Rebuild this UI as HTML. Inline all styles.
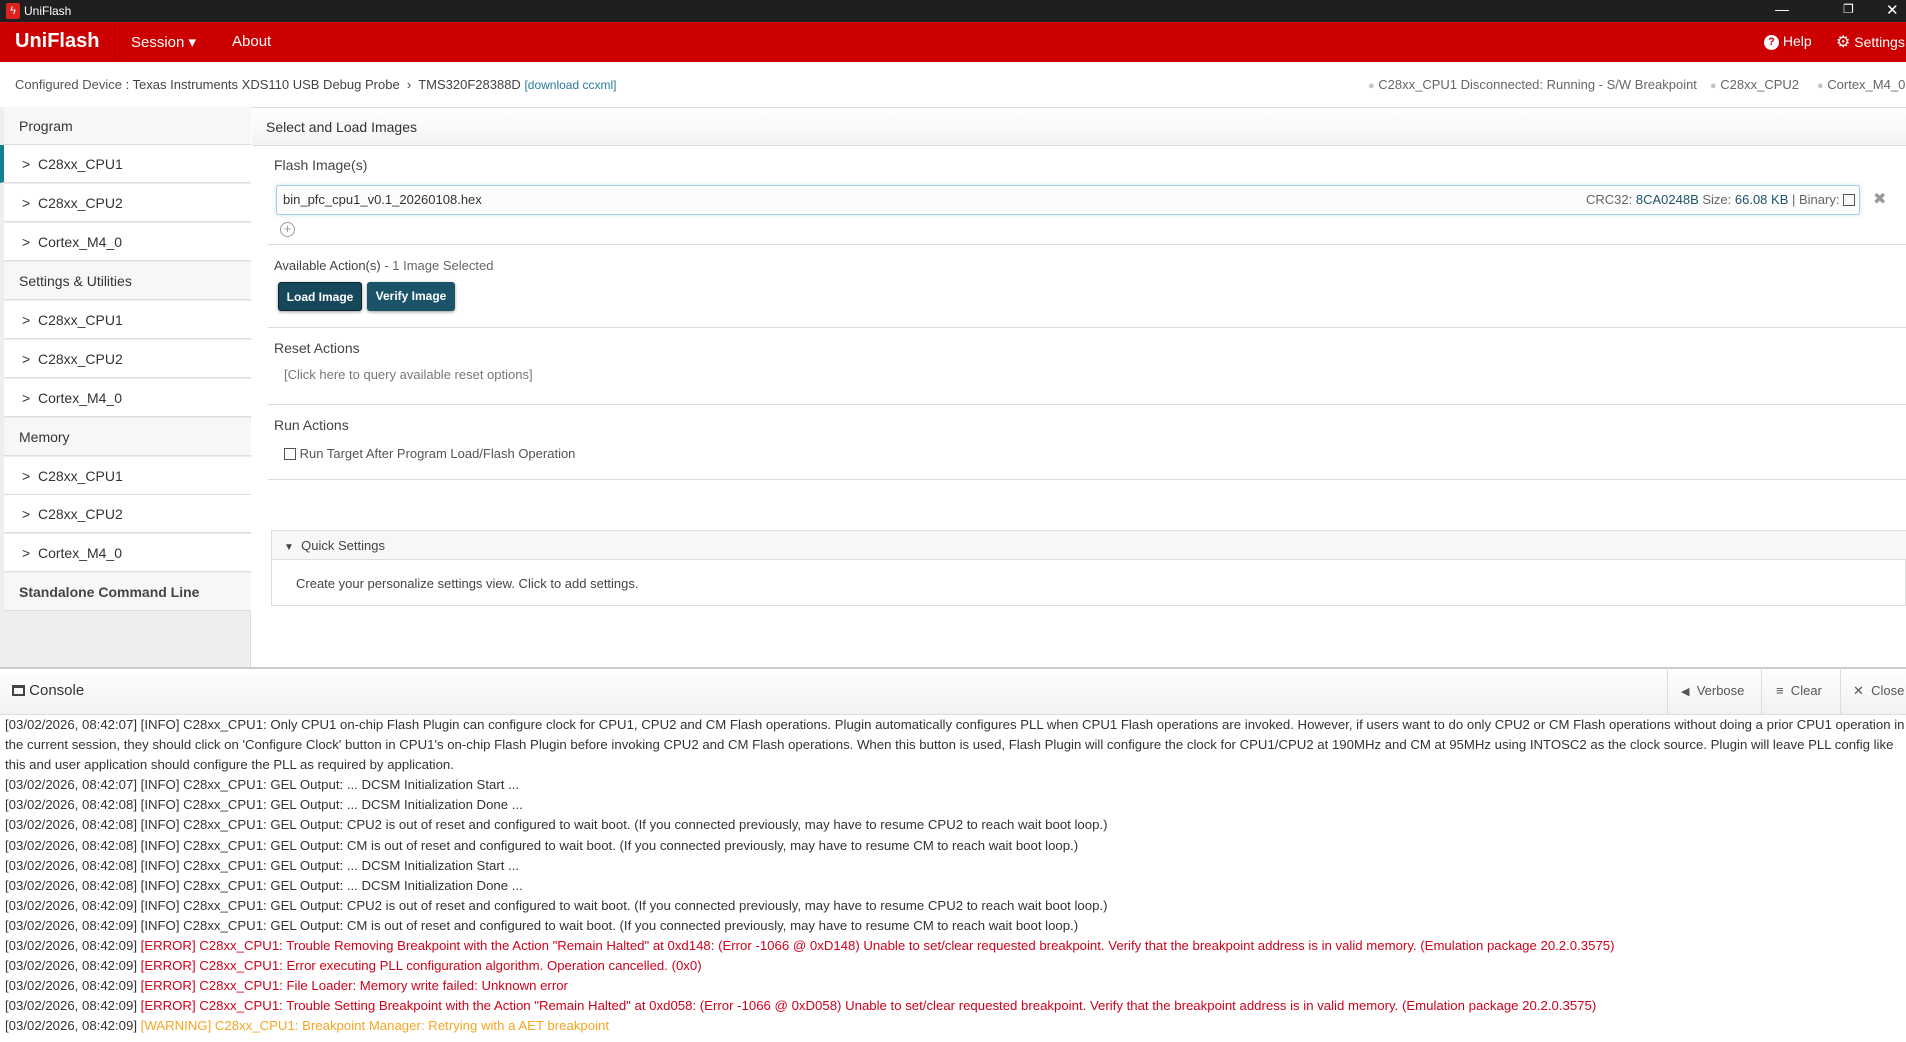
<!DOCTYPE html>
<html><head><meta charset="utf-8"><style>
*{box-sizing:border-box;margin:0;padding:0}
body{width:1906px;height:1042px;overflow:hidden;background:#fff;font-family:"Liberation Sans",sans-serif;color:#333;position:relative}
.a{position:absolute;white-space:nowrap}
.title{left:0;top:0;width:1906px;height:22px;background:#1f1f1f;color:#fff;font-size:12px}
.nav{left:0;top:22px;width:1906px;height:40px;background:#cc0000;color:#fff}
.sb{left:0;top:107px;width:251px;height:560px;background:#eee;border-right:1px solid #ddd}
.si{position:absolute;left:4px;width:247px;height:38px;background:#fff;border-bottom:1px solid #ddd;font-size:14px;line-height:38px;padding-left:18px;color:#333}
.sh{position:absolute;left:4px;width:247px;height:38px;background:#f7f7f7;border-bottom:1px solid #ddd;font-size:14px;line-height:38px;padding-left:15px;color:#333}
.hr{position:absolute;left:268px;width:1638px;height:1px;background:#ddd}
.btn{position:absolute;top:282px;height:29px;background:#1b5469;color:#fff;font-size:12px;font-weight:bold;line-height:29px;text-align:center;border-radius:3px;box-shadow:0 1px 3px rgba(0,0,0,.4)}
.con{left:0;top:715px;width:1906px;font-size:13.2px;line-height:20.1px;color:#333;padding-left:5px}
.con div{white-space:nowrap}
.e{color:#d0021b}.w{color:#f5a623}
.dot{color:#c4c4c4;font-size:11px}
</style></head><body>
<div class="a title"><span style="position:absolute;left:6px;top:3px;width:14px;height:16px;background:#d22;border-radius:2px;color:#fff;font-size:11px;text-align:center;line-height:16px">ϟ</span><span style="position:absolute;left:24px;top:4px">UniFlash</span>
<span style="position:absolute;left:1775px;top:1px;font-size:14px">—</span><span style="position:absolute;left:1843px;top:2px;font-size:12px">❐</span><span style="position:absolute;left:1886px;top:1px;font-size:15px">✕</span></div>
<div class="a nav"><span style="position:absolute;left:15px;top:8px;font-size:20px;font-weight:bold">UniFlash</span><div style="position:absolute;left:114px;top:0;width:1px;height:40px;background:#b80000"></div>
<span style="position:absolute;left:131px;top:11px;font-size:15px">Session ▾</span><span style="position:absolute;left:232px;top:11px;font-size:15px">About</span>
<span style="position:absolute;left:1764px;top:11px;font-size:14px"><b style="display:inline-block;width:15px;height:15px;border-radius:50%;background:#fff;color:#c00;font-size:11px;text-align:center;line-height:15px;vertical-align:1px">?</b> Help</span>
<span style="position:absolute;left:1836px;top:10px;font-size:14px"><span style="font-size:16px">⚙</span> Settings</span></div>
<div class="a" style="left:15px;top:77px;font-size:13px;color:#444"><b style="font-weight:normal;color:#555">Configured Device</b> : Texas Instruments XDS110 USB Debug Probe &nbsp;›&nbsp; TMS320F28388D <span style="color:#2a7a9a;font-size:12px">[download ccxml]</span></div>
<div class="a" style="left:1368px;top:77px;font-size:13px;color:#666"><span class="dot">●</span> C28xx_CPU1 Disconnected: Running - S/W Breakpoint</div>
<div class="a" style="left:1710px;top:77px;font-size:13px;color:#666"><span class="dot">●</span> C28xx_CPU2</div>
<div class="a" style="left:1817px;top:77px;font-size:13px;color:#666"><span class="dot">●</span> Cortex_M4_0</div>
<div class="a" style="left:0;top:107px;width:1906px;height:1px;background:#ddd"></div>
<div class="a sb">
<div class="sh" style="top:0">Program</div>
<div class="si" style="top:38px;border-left:4px solid #128090;left:0;width:251px">&gt;&nbsp; C28xx_CPU1</div>
<div class="si" style="top:77px">&gt;&nbsp; C28xx_CPU2</div>
<div class="si" style="top:116px">&gt;&nbsp; Cortex_M4_0</div>
<div class="sh" style="top:155px">Settings &amp; Utilities</div>
<div class="si" style="top:194px">&gt;&nbsp; C28xx_CPU1</div>
<div class="si" style="top:233px">&gt;&nbsp; C28xx_CPU2</div>
<div class="si" style="top:272px">&gt;&nbsp; Cortex_M4_0</div>
<div class="sh" style="top:311px">Memory</div>
<div class="si" style="top:350px">&gt;&nbsp; C28xx_CPU1</div>
<div class="si" style="top:388px">&gt;&nbsp; C28xx_CPU2</div>
<div class="si" style="top:427px">&gt;&nbsp; Cortex_M4_0</div>
<div class="sh" style="top:466px;font-weight:bold;color:#444">Standalone Command Line</div>
</div>
<div class="a" style="left:252px;top:108px;width:1654px;height:38px;background:linear-gradient(#fff,#f3f3f3);border-bottom:1px solid #ddd;font-size:14px;line-height:38px;padding-left:14px;color:#333">Select and Load Images</div>
<div class="a" style="left:274px;top:157px;font-size:14px;color:#444">Flash Image(s)</div>
<div class="a" style="left:276px;top:185px;width:1584px;height:30px;border:1px solid #9fd0e0;border-radius:3px;box-shadow:0 0 4px #bfe3ee;background:#fcfcfc"></div>
<div class="a" style="left:283px;top:192px;font-size:13px;color:#333">bin_pfc_cpu1_v0.1_20260108.hex</div>
<div class="a" style="left:1586px;top:192px;font-size:13px;color:#666">CRC32: <span style="color:#1b5469">8CA0248B</span> Size: <span style="color:#1b5469">66.08 KB</span> | Binary: <span style="display:inline-block;width:12px;height:12px;border:1px solid #555;vertical-align:-2px"></span></div>
<div class="a" style="left:1873px;top:189px;font-size:16px;color:#999">✖</div>
<div class="a" style="left:280px;top:222px;width:15px;height:15px;border:1px solid #999;border-radius:50%;color:#999;font-size:13px;line-height:12px;text-align:center">+</div>
<div class="hr" style="top:244px"></div>
<div class="a" style="left:274px;top:258px;font-size:13px;color:#444">Available Action(s) <span style="color:#666">- 1 Image Selected</span></div>
<div class="btn" style="left:278px;width:84px;background:#17475a;border:1px solid #0a2630">Load Image</div>
<div class="btn" style="left:367px;width:88px">Verify Image</div>
<div class="hr" style="top:327px"></div>
<div class="a" style="left:274px;top:340px;font-size:14px;color:#444">Reset Actions</div>
<div class="a" style="left:284px;top:367px;font-size:13px;color:#777">[Click here to query available reset options]</div>
<div class="hr" style="top:404px"></div>
<div class="a" style="left:274px;top:417px;font-size:14px;color:#444">Run Actions</div>
<div class="a" style="left:284px;top:446px;font-size:13px;color:#555"><span style="display:inline-block;width:12px;height:12px;border:1px solid #555;vertical-align:-2px"></span> Run Target After Program Load/Flash Operation</div>
<div class="hr" style="top:479px"></div>
<div class="a" style="left:271px;top:530px;width:1635px;height:76px;border:1px solid #ddd"></div>
<div class="a" style="left:272px;top:531px;width:1634px;height:29px;background:#f7f7f7;border-bottom:1px solid #ddd;font-size:13px;line-height:29px;padding-left:12px;color:#444"><span style="font-size:10px">▼</span>&nbsp; Quick Settings</div>
<div class="a" style="left:296px;top:576px;font-size:13px;color:#444">Create your personalize settings view. Click to add settings.</div>
<div class="a" style="left:0;top:667px;width:1906px;height:48px;background:linear-gradient(#fff,#f2f2f2);border-top:2px solid #ccc;border-bottom:1px solid #ddd"></div>
<div class="a" style="left:12px;top:682px;font-size:15px;color:#333"><span style="display:inline-block;width:13px;height:11px;border:2px solid #444;border-top-width:3px;vertical-align:-1px"></span> Console</div>
<div class="a" style="left:1667px;top:668px;width:1px;height:47px;background:#ddd"></div>
<div class="a" style="left:1761px;top:668px;width:1px;height:47px;background:#ddd"></div>
<div class="a" style="left:1840px;top:668px;width:1px;height:47px;background:#ddd"></div>
<div class="a" style="left:1681px;top:683px;font-size:13px;color:#555"><span style="font-size:11px">◀︎</span>&nbsp; Verbose</div>
<div class="a" style="left:1776px;top:683px;font-size:13px;color:#555">≡&nbsp; Clear</div>
<div class="a" style="left:1853px;top:683px;font-size:13px;color:#555">✕&nbsp; Close</div>
<div class="a con">
<div>[03/02/2026, 08:42:07] [INFO] C28xx_CPU1: Only CPU1 on-chip Flash Plugin can configure clock for CPU1, CPU2 and CM Flash operations. Plugin automatically configures PLL when CPU1 Flash operations are invoked. However, if users want to do only CPU2 or CM Flash operations without doing a prior CPU1 operation in</div>
<div>the current session, they should click on 'Configure Clock' button in CPU1's on-chip Flash Plugin before invoking CPU2 and CM Flash operations. When this button is used, Flash Plugin will configure the clock for CPU1/CPU2 at 190MHz and CM at 95MHz using INTOSC2 as the clock source. Plugin will leave PLL config like</div>
<div>this and user application should configure the PLL as required by application.</div>
<div>[03/02/2026, 08:42:07] [INFO] C28xx_CPU1: GEL Output: ... DCSM Initialization Start ...</div>
<div>[03/02/2026, 08:42:08] [INFO] C28xx_CPU1: GEL Output: ... DCSM Initialization Done ...</div>
<div>[03/02/2026, 08:42:08] [INFO] C28xx_CPU1: GEL Output: CPU2 is out of reset and configured to wait boot. (If you connected previously, may have to resume CPU2 to reach wait boot loop.)</div>
<div>[03/02/2026, 08:42:08] [INFO] C28xx_CPU1: GEL Output: CM is out of reset and configured to wait boot. (If you connected previously, may have to resume CM to reach wait boot loop.)</div>
<div>[03/02/2026, 08:42:08] [INFO] C28xx_CPU1: GEL Output: ... DCSM Initialization Start ...</div>
<div>[03/02/2026, 08:42:08] [INFO] C28xx_CPU1: GEL Output: ... DCSM Initialization Done ...</div>
<div>[03/02/2026, 08:42:09] [INFO] C28xx_CPU1: GEL Output: CPU2 is out of reset and configured to wait boot. (If you connected previously, may have to resume CPU2 to reach wait boot loop.)</div>
<div>[03/02/2026, 08:42:09] [INFO] C28xx_CPU1: GEL Output: CM is out of reset and configured to wait boot. (If you connected previously, may have to resume CM to reach wait boot loop.)</div>
<div>[03/02/2026, 08:42:09] <span class="e">[ERROR] C28xx_CPU1: Trouble Removing Breakpoint with the Action "Remain Halted" at 0xd148: (Error -1066 @ 0xD148) Unable to set/clear requested breakpoint. Verify that the breakpoint address is in valid memory. (Emulation package 20.2.0.3575)</span></div>
<div>[03/02/2026, 08:42:09] <span class="e">[ERROR] C28xx_CPU1: Error executing PLL configuration algorithm. Operation cancelled. (0x0)</span></div>
<div>[03/02/2026, 08:42:09] <span class="e">[ERROR] C28xx_CPU1: File Loader: Memory write failed: Unknown error</span></div>
<div>[03/02/2026, 08:42:09] <span class="e">[ERROR] C28xx_CPU1: Trouble Setting Breakpoint with the Action "Remain Halted" at 0xd058: (Error -1066 @ 0xD058) Unable to set/clear requested breakpoint. Verify that the breakpoint address is in valid memory. (Emulation package 20.2.0.3575)</span></div>
<div>[03/02/2026, 08:42:09] <span class="w">[WARNING] C28xx_CPU1: Breakpoint Manager: Retrying with a AET breakpoint</span></div>
</div>
</body></html>
